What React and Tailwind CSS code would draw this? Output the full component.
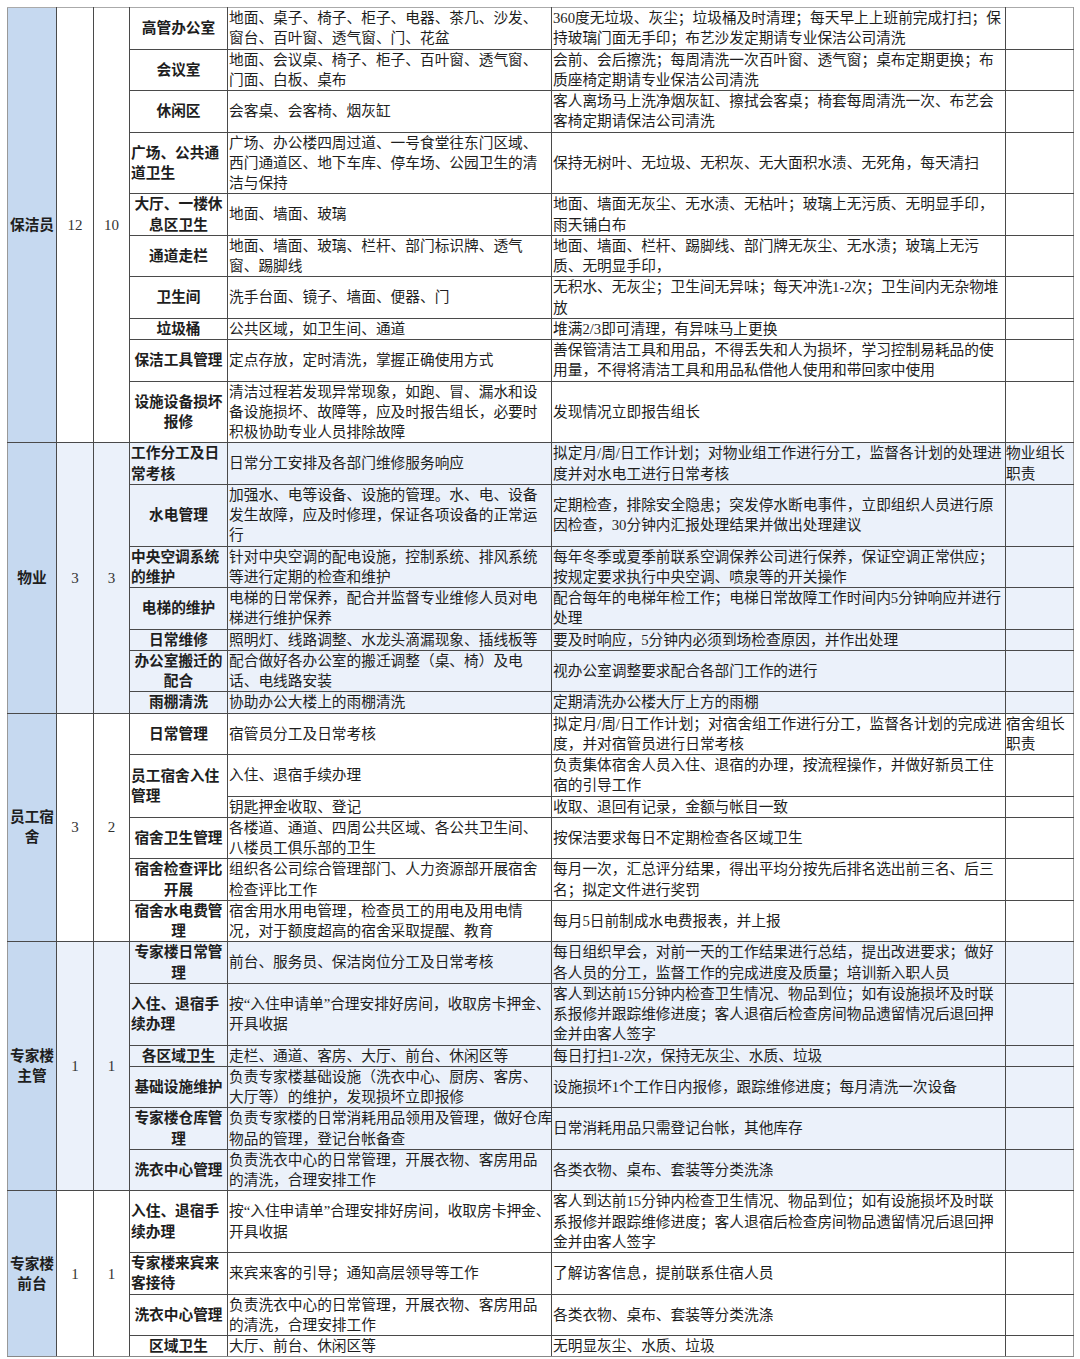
const sections = [
  {
    role: ["保洁员"],
    a: "12",
    b: "10",
    tint: false,
    rows: [
      {
        label: ["高管办公室"],
        content: ["地面、桌子、椅子、柜子、电器、茶几、沙发、", "窗台、百叶窗、透气窗、门、花盆"],
        standard: ["360度无垃圾、灰尘；垃圾桶及时清理；每天早上上班前完成打扫；保", "持玻璃门面无手印；布艺沙发定期请专业保洁公司清洗"],
      },
      {
        label: ["会议室"],
        content: ["地面、会议桌、椅子、柜子、百叶窗、透气窗、", "门面、白板、桌布"],
        standard: ["会前、会后擦洗；每周清洗一次百叶窗、透气窗；桌布定期更换；布", "质座椅定期请专业保洁公司清洗"],
      },
      {
        label: ["休闲区"],
        content: ["会客桌、会客椅、烟灰缸"],
        standard: ["客人离场马上洗净烟灰缸、擦拭会客桌；椅套每周清洗一次、布艺会", "客椅定期请保洁公司清洗"],
      },
      {
        label: ["广场、公共通", "道卫生"],
        left: true,
        content: ["广场、办公楼四周过道、一号食堂往东门区域、", "西门通道区、地下车库、停车场、公园卫生的清", "洁与保持"],
        standard: ["保持无树叶、无垃圾、无积灰、无大面积水渍、无死角，每天清扫"],
      },
      {
        label: ["大厅、一楼休", "息区卫生"],
        content: ["地面、墙面、玻璃"],
        standard: ["地面、墙面无灰尘、无水渍、无枯叶；玻璃上无污质、无明显手印，", "雨天铺白布"],
      },
      {
        label: ["通道走栏"],
        content: ["地面、墙面、玻璃、栏杆、部门标识牌、透气", "窗、踢脚线"],
        standard: ["地面、墙面、栏杆、踢脚线、部门牌无灰尘、无水渍；玻璃上无污", "质、无明显手印，"],
      },
      {
        label: ["卫生间"],
        content: ["洗手台面、镜子、墙面、便器、门"],
        standard: ["无积水、无灰尘；卫生间无异味；每天冲洗1-2次；卫生间内无杂物堆", "放"],
      },
      {
        label: ["垃圾桶"],
        content: ["公共区域，如卫生间、通道"],
        standard: ["堆满2/3即可清理，有异味马上更换"],
      },
      {
        label: ["保洁工具管理"],
        content: ["定点存放，定时清洗，掌握正确使用方式"],
        standard: ["善保管清洁工具和用品，不得丢失和人为损坏，学习控制易耗品的使", "用量，不得将清洁工具和用品私借他人使用和带回家中使用"],
      },
      {
        label: ["设施设备损坏", "报修"],
        content: ["清洁过程若发现异常现象，如跑、冒、漏水和设", "备设施损坏、故障等，应及时报告组长，必要时", "积极协助专业人员排除故障"],
        standard: ["发现情况立即报告组长"],
      },
    ],
  },
  {
    role: ["物业"],
    a: "3",
    b: "3",
    tint: true,
    rows: [
      {
        label: ["工作分工及日", "常考核"],
        left: true,
        content: ["日常分工安排及各部门维修服务响应"],
        standard: ["拟定月/周/日工作计划；对物业组工作进行分工，监督各计划的处理进", "度并对水电工进行日常考核"],
        extra: ["物业组长", "职责"],
      },
      {
        label: ["水电管理"],
        content: ["加强水、电等设备、设施的管理。水、电、设备", "发生故障，应及时修理，保证各项设备的正常运", "行"],
        standard: ["定期检查，排除安全隐患；突发停水断电事件，立即组织人员进行原", "因检查，30分钟内汇报处理结果并做出处理建议"],
      },
      {
        label: ["中央空调系统", "的维护"],
        left: true,
        content: ["针对中央空调的配电设施，控制系统、排风系统", "等进行定期的检查和维护"],
        standard: ["每年冬季或夏季前联系空调保养公司进行保养，保证空调正常供应；", "按规定要求执行中央空调、喷泉等的开关操作"],
      },
      {
        label: ["电梯的维护"],
        content: ["电梯的日常保养，配合并监督专业维修人员对电", "梯进行维护保养"],
        standard: ["配合每年的电梯年检工作；电梯日常故障工作时间内5分钟响应并进行", "处理"],
      },
      {
        label: ["日常维修"],
        content: ["照明灯、线路调整、水龙头滴漏现象、插线板等"],
        standard: ["要及时响应，5分钟内必须到场检查原因，并作出处理"],
      },
      {
        label: ["办公室搬迁的", "配合"],
        content: ["配合做好各办公室的搬迁调整（桌、椅）及电", "话、电线路安装"],
        standard: ["视办公室调整要求配合各部门工作的进行"],
      },
      {
        label: ["雨棚清洗"],
        content: ["协助办公大楼上的雨棚清洗"],
        standard: ["定期清洗办公楼大厅上方的雨棚"],
      },
    ],
  },
  {
    role: ["员工宿", "舍"],
    a: "3",
    b: "2",
    tint: false,
    rows: [
      {
        label: ["日常管理"],
        content: ["宿管员分工及日常考核"],
        standard: ["拟定月/周/日工作计划；对宿舍组工作进行分工，监督各计划的完成进", "度，并对宿管员进行日常考核"],
        extra: ["宿舍组长", "职责"],
      },
      {
        label: ["员工宿舍入住", "管理"],
        left: true,
        subs: [
          {
            content: ["入住、退宿手续办理"],
            standard: ["负责集体宿舍人员入住、退宿的办理，按流程操作，并做好新员工住", "宿的引导工作"],
          },
          {
            content: ["钥匙押金收取、登记"],
            standard: ["收取、退回有记录，金额与帐目一致"],
          },
        ],
      },
      {
        label: ["宿舍卫生管理"],
        content: ["各楼道、通道、四周公共区域、各公共卫生间、", "八楼员工俱乐部的卫生"],
        standard: ["按保洁要求每日不定期检查各区域卫生"],
      },
      {
        label: ["宿舍检查评比", "开展"],
        content: ["组织各公司综合管理部门、人力资源部开展宿舍", "检查评比工作"],
        standard: ["每月一次，汇总评分结果，得出平均分按先后排名选出前三名、后三", "名；拟定文件进行奖罚"],
      },
      {
        label: ["宿舍水电费管", "理"],
        content: ["宿舍用水用电管理，检查员工的用电及用电情", "况，对于额度超高的宿舍采取提醒、教育"],
        standard: ["每月5日前制成水电费报表，并上报"],
      },
    ],
  },
  {
    role: ["专家楼", "主管"],
    a: "1",
    b: "1",
    tint: true,
    rows: [
      {
        label: ["专家楼日常管", "理"],
        content: ["前台、服务员、保洁岗位分工及日常考核"],
        standard: ["每日组织早会，对前一天的工作结果进行总结，提出改进要求；做好", "各人员的分工，监督工作的完成进度及质量；培训新入职人员"],
      },
      {
        label: ["入住、退宿手", "续办理"],
        left: true,
        content: ["按“入住申请单”合理安排好房间，收取房卡押金、", "开具收据"],
        standard: ["客人到达前15分钟内检查卫生情况、物品到位；如有设施损坏及时联", "系报修并跟踪维修进度；客人退宿后检查房间物品遗留情况后退回押", "金并由客人签字"],
      },
      {
        label: ["各区域卫生"],
        content: ["走栏、通道、客房、大厅、前台、休闲区等"],
        standard: ["每日打扫1-2次，保持无灰尘、水质、垃圾"],
      },
      {
        label: ["基础设施维护"],
        content: ["负责专家楼基础设施（洗衣中心、厨房、客房、", "大厅等）的维护，发现损坏立即报修"],
        standard: ["设施损坏1个工作日内报修，跟踪维修进度；每月清洗一次设备"],
      },
      {
        label: ["专家楼仓库管", "理"],
        content: ["负责专家楼的日常消耗用品领用及管理，做好仓库", "物品的管理，登记台帐备查"],
        standard: ["日常消耗用品只需登记台帐，其他库存"],
      },
      {
        label: ["洗衣中心管理"],
        content: ["负责洗衣中心的日常管理，开展衣物、客房用品", "的清洗，合理安排工作"],
        standard: ["各类衣物、桌布、套装等分类洗涤"],
      },
    ],
  },
  {
    role: ["专家楼", "前台"],
    a: "1",
    b: "1",
    tint: false,
    rows: [
      {
        label: ["入住、退宿手", "续办理"],
        left: true,
        content: ["按“入住申请单”合理安排好房间，收取房卡押金、", "开具收据"],
        standard: ["客人到达前15分钟内检查卫生情况、物品到位；如有设施损坏及时联", "系报修并跟踪维修进度；客人退宿后检查房间物品遗留情况后退回押", "金并由客人签字"],
      },
      {
        label: ["专家楼来宾来", "客接待"],
        left: true,
        content: ["来宾来客的引导；通知高层领导等工作"],
        standard: ["了解访客信息，提前联系住宿人员"],
      },
      {
        label: ["洗衣中心管理"],
        content: ["负责洗衣中心的日常管理，开展衣物、客房用品", "的清洗，合理安排工作"],
        standard: ["各类衣物、桌布、套装等分类洗涤"],
      },
      {
        label: ["区域卫生"],
        content: ["大厅、前台、休闲区等"],
        standard: ["无明显灰尘、水质、垃圾"],
      },
    ],
  },
]

const Lines = ({ lines = [] }) =>
  lines.map((t, i) => (
    <div key={i} className="whitespace-nowrap">
      {t}
    </div>
  ))

const cell = "border border-[#4a4a4a] p-0 align-middle leading-[20.25px]"

export default function App() {
  const body = []
  sections.forEach((sec, si) => {
    const trs = sec.rows.flatMap((r) => (r.subs ? r.subs : [r]))
    const isFirstSec = si === 0
    const isLastSec = si === sections.length - 1
    const secEdge = (isFirstSec ? " border-t-[#aaa]" : "") + (isLastSec ? " border-b-[#888]" : "")
    let idx = 0
    sec.rows.forEach((r, ri) => {
      const subs = r.subs || [r]
      const lastRow = isLastSec && ri === sec.rows.length - 1
      subs.forEach((s, k) => {
        const top = isFirstSec && idx === 0
        const bottom = lastRow && k === subs.length - 1
        const edge = (top ? " border-t-[#aaa]" : "") + (bottom ? " border-b-[#888]" : "")
        body.push(
          <tr key={si + "-" + ri + "-" + k} className={sec.tint ? "bg-[#ebf1fa]" : "bg-white"}>
            {idx === 0 && (
              <>
                <td rowSpan={trs.length} className={cell + " bg-[#c6d9f0] border-l-[#999] text-center font-bold" + secEdge}>
                  <Lines lines={sec.role} />
                </td>
                <td rowSpan={trs.length} className={cell + " text-center text-[15px] text-[#333]" + secEdge}>
                  {sec.a}
                </td>
                <td rowSpan={trs.length} className={cell + " text-center text-[15px] text-[#333]" + secEdge}>
                  {sec.b}
                </td>
              </>
            )}
            {k === 0 && (
              <td
                rowSpan={subs.length}
                className={cell + " font-bold px-[1px]" + (r.left ? " text-left" : " text-center") + (top ? " border-t-[#aaa]" : "") + (lastRow ? " border-b-[#888]" : "")}
              >
                <Lines lines={r.label} />
              </td>
            )}
            <td className={cell + " pl-[1px] text-left" + edge}>
              <Lines lines={s.content} />
            </td>
            <td className={cell + " pl-[1px] text-left" + edge}>
              <Lines lines={s.standard} />
            </td>
            <td className={cell + " text-left border-r-[#999]" + edge}>
              <Lines lines={s.extra} />
            </td>
          </tr>
        )
        idx++
      })
    })
  })

  return (
    <div className="min-h-screen bg-white pt-[7px] pl-[7px]">
      <table
        className="table-fixed border-collapse w-[1066px] text-[14.7px] text-[#1e1e1e]"
        style={{ fontFamily: '"Liberation Serif", "Noto Sans CJK SC", serif' }}
      >
        <colgroup>
          <col className="w-[49px]" />
          <col className="w-[37px]" />
          <col className="w-[36px]" />
          <col className="w-[98px]" />
          <col className="w-[324px]" />
          <col className="w-[454px]" />
          <col className="w-[68px]" />
        </colgroup>
        <tbody>{body}</tbody>
      </table>
    </div>
  )
}
